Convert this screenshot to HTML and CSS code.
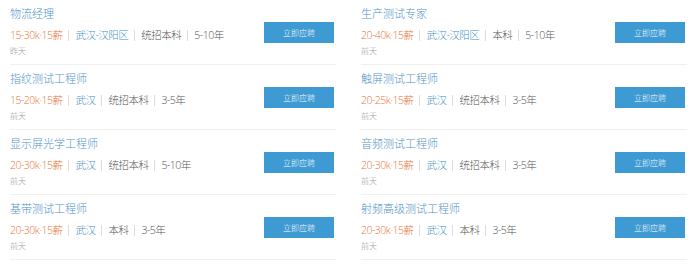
FILE: index.html
```html
<!DOCTYPE html>
<html lang="zh-CN">

<head>
    <meta charset="UTF-8">
    <title>职位列表</title>
    <link rel="stylesheet" href="styles.css">
</head>

<body>
    <div class="job-list">
        <div class="job">
            <div class="job-info">
                <div class="job-title">物流经理</div>
                <div class="job-meta">
                    <span class="salary">15-30k·15薪</span>
                    <span class="city">武汉-汉阳区</span>
                    <span class="item">统招本科</span>
                    <span class="item">5-10年</span>
                </div>
                <div class="job-date">昨天</div>
            </div>
            <a class="apply-btn" href="#">立即应聘</a>
        </div>
        <div class="job">
            <div class="job-info">
                <div class="job-title">生产测试专家</div>
                <div class="job-meta">
                    <span class="salary">20-40k·15薪</span>
                    <span class="city">武汉-汉阳区</span>
                    <span class="item">本科</span>
                    <span class="item">5-10年</span>
                </div>
                <div class="job-date">前天</div>
            </div>
            <a class="apply-btn" href="#">立即应聘</a>
        </div>

        <div class="job">
            <div class="job-info">
                <div class="job-title">指纹测试工程师</div>
                <div class="job-meta">
                    <span class="salary">15-20k·15薪</span>
                    <span class="city">武汉</span>
                    <span class="item">统招本科</span>
                    <span class="item">3-5年</span>
                </div>
                <div class="job-date">前天</div>
            </div>
            <a class="apply-btn" href="#">立即应聘</a>
        </div>
        <div class="job">
            <div class="job-info">
                <div class="job-title">触屏测试工程师</div>
                <div class="job-meta">
                    <span class="salary">20-25k·15薪</span>
                    <span class="city">武汉</span>
                    <span class="item">统招本科</span>
                    <span class="item">3-5年</span>
                </div>
                <div class="job-date">前天</div>
            </div>
            <a class="apply-btn" href="#">立即应聘</a>
        </div>

        <div class="job">
            <div class="job-info">
                <div class="job-title">显示屏光学工程师</div>
                <div class="job-meta">
                    <span class="salary">20-30k·15薪</span>
                    <span class="city">武汉</span>
                    <span class="item">统招本科</span>
                    <span class="item">5-10年</span>
                </div>
                <div class="job-date">前天</div>
            </div>
            <a class="apply-btn" href="#">立即应聘</a>
        </div>
        <div class="job">
            <div class="job-info">
                <div class="job-title">音频测试工程师</div>
                <div class="job-meta">
                    <span class="salary">20-30k·15薪</span>
                    <span class="city">武汉</span>
                    <span class="item">统招本科</span>
                    <span class="item">3-5年</span>
                </div>
                <div class="job-date">前天</div>
            </div>
            <a class="apply-btn" href="#">立即应聘</a>
        </div>

        <div class="job">
            <div class="job-info">
                <div class="job-title">基带测试工程师</div>
                <div class="job-meta">
                    <span class="salary">20-30k·15薪</span>
                    <span class="city">武汉</span>
                    <span class="item">本科</span>
                    <span class="item">3-5年</span>
                </div>
                <div class="job-date">前天</div>
            </div>
            <a class="apply-btn" href="#">立即应聘</a>
        </div>
        <div class="job">
            <div class="job-info">
                <div class="job-title">射频高级测试工程师</div>
                <div class="job-meta">
                    <span class="salary">20-30k·15薪</span>
                    <span class="city">武汉</span>
                    <span class="item">本科</span>
                    <span class="item">3-5年</span>
                </div>
                <div class="job-date">前天</div>
            </div>
            <a class="apply-btn" href="#">立即应聘</a>
        </div>
    </div>
</body>

</html>
```

FILE: styles.css
```css
body {
    margin: 0;
    background: #fff;
    font-family: 'Open Sans', 'Noto Sans CJK SC', sans-serif;
    font-weight: 300;
}

.job-list {
    display: grid;
    grid-template-columns: repeat(2, minmax(0, 1fr));
    column-gap: 25px;
    padding: 0 13px 0 10px;
}

.job {
    display: flex;
    align-items: center;
    justify-content: space-between;
    height: 64px;
    border-bottom: 1px solid #f0f0f0;
}

.job-info {
    flex: 1;
    min-width: 0;
    align-self: flex-start;
    padding-top: 6px;
    white-space: nowrap;
}

.job-title {
    font-size: 11px;
    line-height: 16px;
    color: #4f93c8;
}

.job-meta {
    display: flex;
    align-items: center;
    margin-top: 5px;
    font-size: 10.5px;
    letter-spacing: -0.5px;
    line-height: 16px;
    color: #555;
}

.job-meta span + span {
    margin-left: 6px;
    padding-left: 6px;
    border-left: 1px solid #ddd;
    line-height: 11px;
}

.salary {
    color: #e8773c;
}

.city {
    color: #3f8fc8;
}

.job-date {
    margin-top: 2px;
    font-size: 8px;
    line-height: 12px;
    color: #999;
}

.apply-btn {
    flex: none;
    display: block;
    width: 70px;
    height: 21px;
    margin-right: 2px;
    background: #3d9ad3;
    color: #fff;
    font-size: 8px;
    line-height: 21px;
    text-align: center;
    text-decoration: none;
}
```
